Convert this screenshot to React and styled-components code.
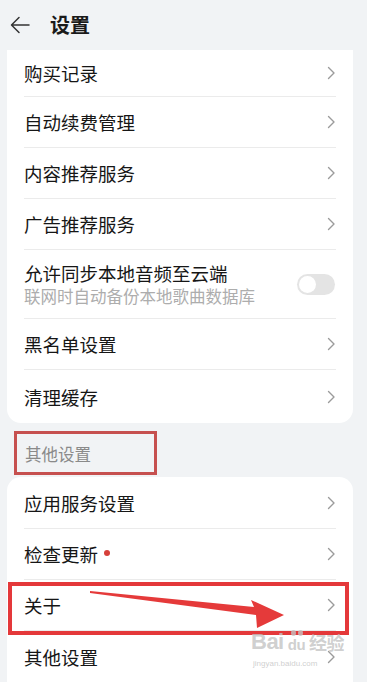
import React from "react";
import styled, { createGlobalStyle } from "styled-components";

const Global = createGlobalStyle`
  html, body { margin: 0; padding: 0; background: #f1f3f5; }
  body { font-family: "Noto Sans CJK SC", "Noto Sans", sans-serif; }
  * { box-sizing: border-box; }
`;

const Page = styled.div`
  width: 367px;
  height: 682px;
  overflow: hidden;
  background: #f1f3f5;
  position: relative;
`;

const Header = styled.div`
  height: 50px;
  display: flex;
  align-items: center;
  padding-left: 10px;
  gap: 20px;
`;

const Title = styled.div`
  font-size: 20px;
  font-weight: 700;
  color: #1a1a1a;
  line-height: 24px;
`;

const Card = styled.div`
  margin: 0 14px 0 7px;
  background: #fff;
  border-radius: ${(p) => (p.$flatTop ? "0 0 14px 14px" : "14px 14px 0 0")};
  padding: 0 17px;
`;

const Row = styled.div`
  position: relative;
  height: ${(p) => p.$h || 51}px;
  display: flex;
  align-items: center;
  justify-content: space-between;
  border-bottom: ${(p) => (p.$last ? "none" : "1px solid #ebebeb")};
`;

const Texts = styled.div`
  display: flex;
  flex-direction: column;
`;

const Label = styled.div`
  font-size: 18.5px;
  line-height: 24px;
  color: #161616;
  display: flex;
  align-items: center;
  gap: 6px;
`;

const Sub = styled.div`
  font-size: 16.5px;
  line-height: 22px;
  color: #adadad;
`;

const Dot = styled.span`
  width: 6px;
  height: 6px;
  border-radius: 50%;
  background: #d6403a;
  margin-top: -2px;
`;

const Toggle = styled.div`
  width: 38px;
  height: 21px;
  border-radius: 11px;
  background: #e4e4e4;
  position: relative;
  margin-right: 1px;
  &::after {
    content: "";
    position: absolute;
    left: 2px;
    top: 2px;
    width: 17px;
    height: 17px;
    border-radius: 50%;
    background: #fff;
  }
`;

const Highlight = styled.div`
  position: absolute;
  left: -16px;
  right: -13px;
  top: 2px;
  bottom: -5px;
  border: 4px solid #e4383a;
  pointer-events: none;
`;

const Section = styled.div`
  height: 54px;
  padding: 8px 0 2px 14px;
  display: flex;
`;

const SectionBox = styled.div`
  width: 143px;
  height: 44px;
  border: 3px solid #c6504f;
  display: flex;
  align-items: center;
  padding-left: 8px;
  padding-top: 2px;
`;

const SectionLabel = styled.div`
  font-size: 16.5px;
  color: #8a8a8a;
`;

const ArrowSvg = styled.svg`
  position: absolute;
  left: -24px;
  top: 0;
  pointer-events: none;
  overflow: visible;
`;

const Watermark = styled.div`
  position: absolute;
  left: 251px;
  top: 630px;
  color: rgba(195, 195, 195, 0.8);
  font-family: "Liberation Sans", sans-serif;
  pointer-events: none;
  display: flex;
  flex-direction: column;
  align-items: flex-start;
`;

const WmTop = styled.div`
  font-size: 22px;
  font-weight: 700;
  letter-spacing: -0.5px;
  line-height: 24px;
  display: flex;
  align-items: flex-end;
  gap: 3px;
`;

const WmPaw = styled.span`
  position: relative;
  font-size: 15px;
  line-height: 18px;
  padding: 0 1px;
  border-radius: 8px;
  &::before {
    content: "";
    position: absolute;
    top: -6px;
    left: 4px;
    width: 5px;
    height: 6px;
    border-radius: 50%;
    background: rgba(195, 195, 195, 0.8);
    box-shadow: 7px 0 0 rgba(195, 195, 195, 0.8);
  }
`;

const WmCn = styled.span`
  font-family: "Noto Sans CJK SC", sans-serif;
  font-size: 18px;
  font-weight: 700;
`;

const WmSmall = styled.div`
  font-size: 8px;
  line-height: 12px;
  margin-left: 2px;
  margin-top: 4px;
`;

const Chevron = () => (
  <svg width="9" height="14" viewBox="0 0 9 14">
    <path d="M1.5 1.5 L7 7 L1.5 12.5" fill="none" stroke="#9b9b9b" strokeWidth="1.4" strokeLinecap="round" strokeLinejoin="round" />
  </svg>
);

const BackArrow = () => (
  <svg width="20" height="18" viewBox="0 0 20 18">
    <path d="M19 9 H2 M9 1.5 L1.5 9 L9 16.5" fill="none" stroke="#333" strokeWidth="1.5" strokeLinecap="round" strokeLinejoin="round" />
  </svg>
);

const Item = ({ label, h, last, dot, children }) => (
  <Row $h={h} $last={last}>
    <Label>
      {label}
      {dot && <Dot />}
    </Label>
    {children || <Chevron />}
  </Row>
);

export default function App() {
  return (
    <>
      <Global />
      <Page>
        <Header>
          <BackArrow />
          <Title>设置</Title>
        </Header>
        <Card $flatTop>
          <Item label="购买记录" h={47} />
          <Item label="自动续费管理" />
          <Item label="内容推荐服务" />
          <Item label="广告推荐服务" />
          <Row $h={69}>
            <Texts>
              <Label>允许同步本地音频至云端</Label>
              <Sub>联网时自动备份本地歌曲数据库</Sub>
            </Texts>
            <Toggle />
          </Row>
          <Item label="黑名单设置" />
          <Item label="清理缓存" h={53} last />
        </Card>
        <Section>
          <SectionBox>
            <SectionLabel>其他设置</SectionLabel>
          </SectionBox>
        </Section>
        <Card>
          <Item label="应用服务设置" h={52} />
          <Item label="检查更新" dot />
          <Row $h={51}>
            <Label>关于</Label>
            <Chevron />
            <Highlight />
            <ArrowSvg width="367" height="51" viewBox="0 580 367 51">
              <path d="M90 591 L254 607 L251 600 L284 615 L257 628 L256 615 L90 593 Z" fill="#e53a3a" />
            </ArrowSvg>
          </Row>
          <Item label="其他设置" last />
        </Card>
        <Watermark>
          <WmTop>
            <span>Bai</span>
            <WmPaw>du</WmPaw>
            <WmCn>经验</WmCn>
          </WmTop>
          <WmSmall>jingyan.baidu.com</WmSmall>
        </Watermark>
      </Page>
    </>
  );
}
